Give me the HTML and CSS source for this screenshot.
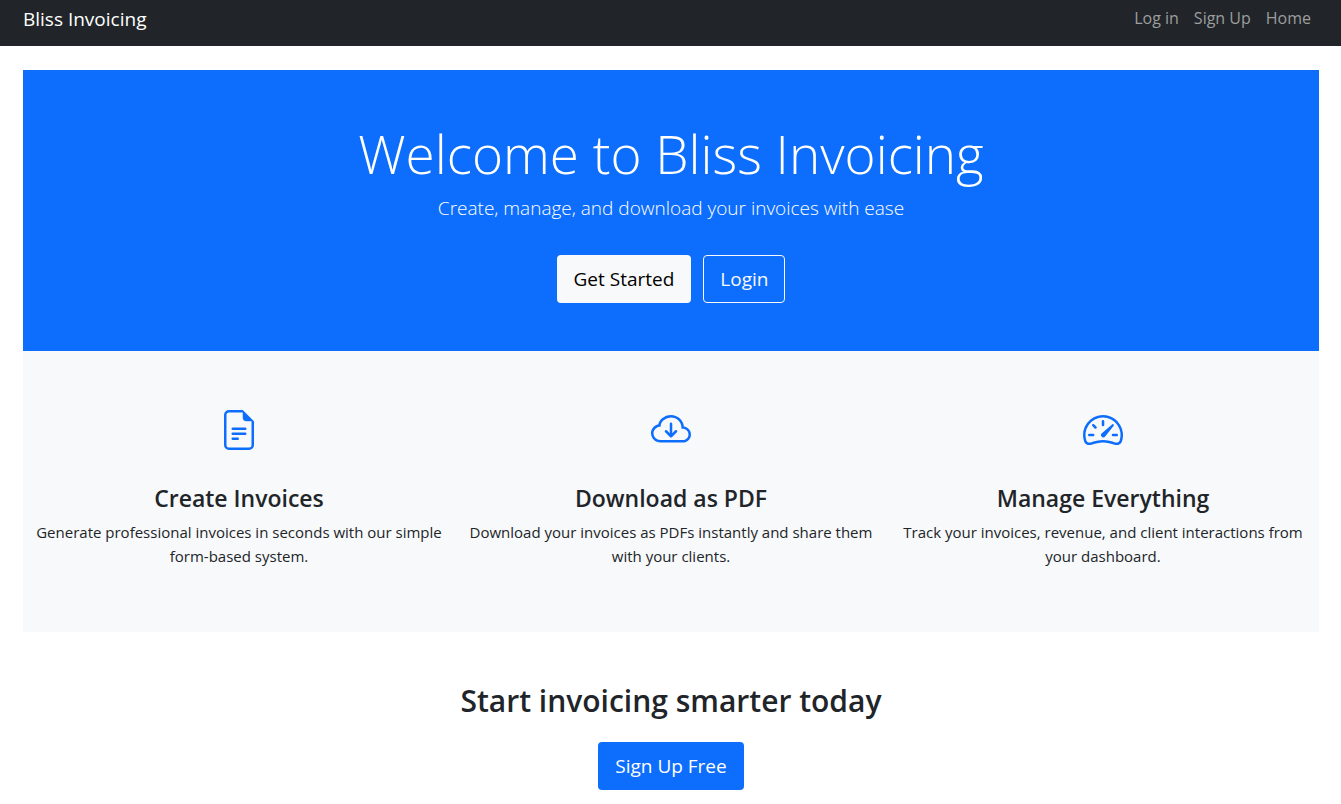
FILE: index.html
```
<!DOCTYPE html>
<html lang="en">
<head>
<meta charset="utf-8">
<meta name="viewport" content="width=device-width, initial-scale=1">
<title>Bliss Invoicing</title>
<link rel="stylesheet" href="styles.css">
</head>
<body>
<nav class="navbar">
  <a class="brand" href="#">Bliss Invoicing</a>
  <div class="nav-links">
    <a class="nav-link" href="#">Log in</a>
    <a class="nav-link" href="#">Sign Up</a>
    <a class="nav-link" href="#">Home</a>
  </div>
</nav>
<main class="page">
  <section class="hero">
    <h1 class="hero-title">Welcome to Bliss Invoicing</h1>
    <p class="lead">Create, manage, and download your invoices with ease</p>
    <div class="actions">
      <a class="btn btn-light" href="#">Get Started</a>
      <a class="btn btn-outline" href="#">Login</a>
    </div>
  </section>
  <section class="features">
    <article class="feature">
      <svg class="icon" viewBox="0 0 16 16" aria-hidden="true"><path d="M5.5 7a.5.5 0 0 0 0 1h5a.5.5 0 0 0 0-1h-5zM5 9.5a.5.5 0 0 1 .5-.5h5a.5.5 0 0 1 0 1h-5a.5.5 0 0 1-.5-.5zm0 2a.5.5 0 0 1 .5-.5h2a.5.5 0 0 1 0 1h-2a.5.5 0 0 1-.5-.5z"/><path d="M9.5 0H4a2 2 0 0 0-2 2v12a2 2 0 0 0 2 2h8a2 2 0 0 0 2-2V4.500L9.500 0zm0 1v2A1.500 1.500 0 0 0 11 4.500h2V14a1 1 0 0 1-1 1H4a1 1 0 0 1-1-1V2a1 1 0 0 1 1-1h5.500z"/></svg>
      <h2 class="feature-title">Create Invoices</h2>
      <p class="feature-text">Generate professional invoices in seconds with our simple form-based system.</p>
    </article>
    <article class="feature">
      <svg class="icon" viewBox="0 0 16 16" aria-hidden="true"><path d="M7.646 10.854a.5.5 0 0 0 .708 0l2-2a.5.5 0 0 0-.708-.708L8.500 9.293V5.500a.5.5 0 0 0-1 0v3.793L6.354 8.146a.5.5 0 1 0-.708.708l2 2z"/><path d="M4.406 3.342A5.530 5.530 0 0 1 8 2c2.690 0 4.923 2 5.166 4.579C14.758 6.804 16 8.137 16 9.773 16 11.569 14.502 13 12.687 13H3.781C1.708 13 0 11.366 0 9.318c0-1.763 1.266-3.223 2.942-3.593.143-.863.698-1.723 1.464-2.383zm.653.757c-.757.653-1.153 1.440-1.153 2.056v.448l-.445.049C2.064 6.805 1 7.952 1 9.318 1 10.785 2.230 12 3.781 12h8.906C13.980 12 15 10.988 15 9.773c0-1.216-1.020-2.228-2.313-2.228h-.5v-.5C12.188 4.825 10.328 3 8 3a4.530 4.530 0 0 0-2.941 1.100z"/></svg>
      <h2 class="feature-title">Download as PDF</h2>
      <p class="feature-text">Download your invoices as PDFs instantly and share them with your clients.</p>
    </article>
    <article class="feature">
      <svg class="icon" viewBox="0 0 16 16" aria-hidden="true"><path d="M8 4a.5.5 0 0 1 .5.5V6a.5.5 0 0 1-1 0V4.500A.5.5 0 0 1 8 4zM3.732 5.732a.5.5 0 0 1 .707 0l.915.914a.5.5 0 1 1-.708.708l-.914-.915a.5.5 0 0 1 0-.707zM2 10a.5.5 0 0 1 .5-.5h1.586a.5.5 0 0 1 0 1H2.500A.5.5 0 0 1 2 10zm9.500 0a.5.5 0 0 1 .5-.5h1.500a.5.5 0 0 1 0 1H12a.5.5 0 0 1-.5-.5zm.754-4.246a.389.389 0 0 0-.527-.020L7.547 9.310a.910.910 0 1 0 1.302 1.258l3.434-4.297a.389.389 0 0 0-.029-.518z"/><path d="M0 10a8 8 0 1 1 15.547 2.661c-.442 1.253-1.845 1.602-2.932 1.250C11.309 13.488 9.475 13 8 13c-1.474 0-3.310.488-4.615.911-1.087.352-2.490.003-2.932-1.250A7.988 7.988 0 0 1 0 10zm8-7a7 7 0 0 0-6.603 9.329c.203.575.923.876 1.680.630C4.397 12.533 6.358 12 8 12s3.604.532 4.923.960c.757.245 1.477-.056 1.680-.631A7 7 0 0 0 8 3z"/></svg>
      <h2 class="feature-title">Manage Everything</h2>
      <p class="feature-text">Track your invoices, revenue, and client interactions from your dashboard.</p>
    </article>
  </section>
  <section class="cta">
    <h2 class="cta-title">Start invoicing smarter today</h2>
    <a class="btn btn-primary" href="#">Sign Up Free</a>
  </section>
</main>
</body>
</html>
```
FILE: styles.css
```
* { box-sizing: border-box; }

body {
  margin: 0;
  background: #fff;
  color: #212529;
  font-family: "Open Sans", "Noto Sans", sans-serif;
  font-size: 15px;
  line-height: 24px;
}

h1, h2, p { margin: 0; }
a { text-decoration: none; }

.navbar {
  display: flex;
  align-items: flex-start;
  justify-content: space-between;
  padding: 4px 30px 12px 23px;
  background: #212529;
}
.brand {
  color: #fff;
  font-size: 19px;
  line-height: 30px;
}
.nav-links { display: flex; gap: 15px; padding-top: 2px; }
.nav-link { color: #9b9d9e; font-size: 16px; }

.page { padding: 24px 22px 0 23px; }

.hero {
  padding: 51px 24px 48px;
  background: #0d6efd;
  color: #fff;
  text-align: center;
}
.hero-title {
  margin-bottom: 6px;
  font-size: 53px;
  font-weight: 300;
  line-height: 66px;
}
.lead {
  margin-bottom: 32px;
  font-size: 19px;
  font-weight: 300;
  line-height: 30px;
}
.actions {
  display: flex;
  justify-content: center;
  gap: 12px;
}

.btn {
  display: inline-block;
  padding: 8px 16px;
  border: 1px solid transparent;
  border-radius: 4px;
  font-size: 19px;
  line-height: 30px;
}
.btn-light { background: #f8f9fa; color: #000; }
.btn-outline { border-color: #f8f9fa; color: #f8f9fa; }
.btn-primary { background: #0d6efd; color: #fff; }

.features {
  display: grid;
  grid-template-columns: repeat(3, 1fr);
  padding: 59px 0 64px;
  background: #f8f9fa;
  text-align: center;
}
.feature { padding: 0 8px; }
.icon {
  display: block;
  width: 40px;
  height: 40px;
  margin: 0 auto 34px;
  fill: #0d6efd;
}
.feature-title {
  margin-bottom: 7px;
  font-size: 23px;
  font-weight: 600;
  line-height: 29px;
}

.cta { padding: 50px 0 12px; text-align: center; }
.cta-title {
  margin-bottom: 22px;
  font-size: 30px;
  font-weight: 600;
  line-height: 38px;
}
```
